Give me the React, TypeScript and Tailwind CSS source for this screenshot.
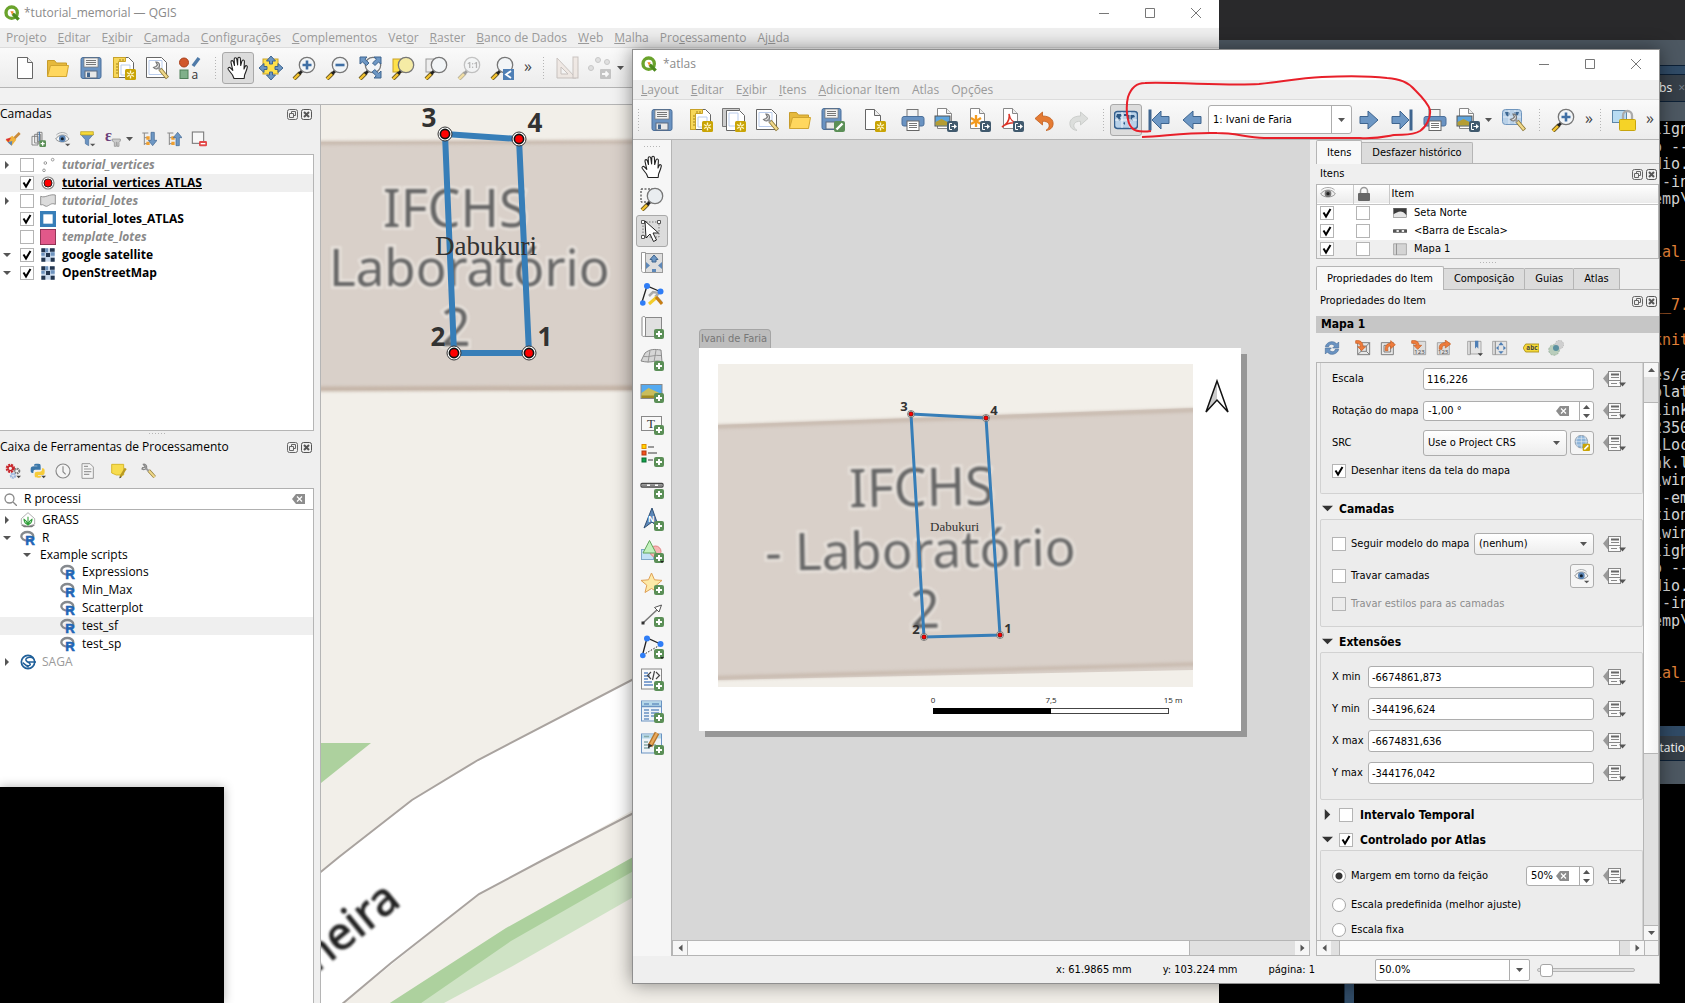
import React, { ReactNode } from "react";

/* ---------- shared icon parts (24 x 24 box) ---------- */

function Svg({ size = 24, children }: { size?: number; children: ReactNode }) {
  return (
    <svg width={size} height={size} viewBox="0 0 24 24" fill="none" aria-hidden="true" className="shrink-0">
      {children}
    </svg>
  );
}

const Plus = () => (
  <g>
    <rect x="14" y="14" width="10" height="10" rx="2" fill="#5b8f57" />
    <path d="M19 16v6M16 19h6" stroke="#fff" strokeWidth="2" />
  </g>
);
const Gold = () => (
  <g>
    <rect x="13" y="13" width="11" height="11" rx="1.500" fill="#c9a405" />
    <path d="M18.500 14.500v8M15 16.500l7 4M22 16.500l-7 4" stroke="#fff6c8" strokeWidth="1.400" />
    <circle cx="18.500" cy="18.500" r="1" fill="#c9a405" />
  </g>
);
const Export = () => (
  <g>
    <rect x="13" y="13" width="11" height="11" rx="2" fill="#415a6e" />
    <path d="M18 15.500h-2.500v6H18M17.500 18.500H22" stroke="#fff" strokeWidth="1" />
    <path d="M20 16v5l3-2.500z" fill="#fff" />
  </g>
);
const Page = () => (
  <g>
    <path d="M4.500 1.500h10l5 5v16h-15z" fill="#fff" stroke="#666" />
    <path d="M14.500 1.500v5h5" fill="#eee" stroke="#666" />
  </g>
);
const HalfPage = () => (
  <g>
    <path d="M3.500 .5h9l5 5v15h-14z" fill="#fff" stroke="#888" />
    <path d="M12.500 .5v5h5" fill="#eee" stroke="#888" />
  </g>
);
const Lens = ({ fill = "#f2f5f7", stroke = "#777" }: { fill?: string; stroke?: string }) => (
  <g>
    <path d="M2 23l6-6" stroke="#665522" strokeWidth="4" />
    <path d="M2 23l5.500-5.500" stroke="#f4c430" strokeWidth="2.400" />
    <path d="M7 18l3-3" stroke="#222" strokeWidth="3" />
    <circle cx="15" cy="9" r="7.700" fill={fill} stroke={stroke} strokeWidth="1.300" />
  </g>
);
const Wrench = () => (
  <g>
    <path d="M15 13l7.500 9" stroke="#8a7430" strokeWidth="4" />
    <path d="M15 13l7 8.500" stroke="#f0d98a" strokeWidth="2.400" />
    <path d="M8.500 11.500c2 2.500 6 1.500 6-2 0-2-1.500-3.500-3.500-3.500l1.500 3-1.500 1.500z" fill="#e4e4e4" stroke="#777" strokeWidth="1.200" />
    <path d="M13 11l2.500 3" stroke="#999" strokeWidth="2.500" />
  </g>
);

const Drop = () => (
  <svg width="9" height="6" viewBox="0 0 9 6" aria-hidden="true" className="shrink-0">
    <path d="M1 1h7L4.500 5z" fill="#555" />
  </svg>
);

const ArrowShape = ({ d }: { d: string }) => <path d={d} fill="#6d97c4" stroke="#3f658f" strokeWidth="1" />;

const icons: Record<string, ReactNode> = {
  qgis: (
    <>
      <circle cx="11.500" cy="11.500" r="8.500" stroke="#6aa32c" strokeWidth="5" />
      <path d="M13 13l9 9" stroke="#4c8a1e" strokeWidth="5" />
      <path d="M9.500 9.500h5l-2 5.500z" fill="#f08a24" />
    </>
  ),
  file: <Page />,
  folder: (
    <>
      <path d="M1.500 20V4.500h7l2 2.500h10V20z" fill="#e6b93c" stroke="#c79c2b" />
      <path d="M1.500 20.500l3-11h18l-2 11z" fill="#ffd75e" stroke="#d1a531" />
    </>
  ),
  save: (
    <>
      <rect x="2" y="1.500" width="20" height="21" rx="2" fill="#6a93c2" stroke="#4a6f9b" />
      <rect x="5" y="2" width="14" height="9" fill="#f2f2f2" stroke="#777" strokeWidth=".7" />
      <path d="M7 4.500h10M7 6.500h10M7 8.500h10" stroke="#777" />
      <rect x="6" y="15" width="12" height="7" fill="#e8e8e8" stroke="#5a6b80" />
      <rect x="8" y="16.500" width="3" height="4.500" fill="#41658f" />
    </>
  ),
  saveAs: (
    <>
      <rect x="1" y=".5" width="19" height="21" rx="2" fill="#6a93c2" stroke="#4a6f9b" />
      <rect x="4" y="1" width="13" height="9" fill="#f2f2f2" stroke="#777" strokeWidth=".7" />
      <path d="M6 3.500h9M6 5.500h9M6 7.500h9" stroke="#777" />
      <rect x="5" y="14" width="9" height="7" fill="#e8e8e8" stroke="#5a6b80" />
      <rect x="13" y="13" width="11" height="11" rx="2" fill="#5b8f57" />
      <path d="M15.500 21.500l6-6" stroke="#fff" strokeWidth="2.400" />
    </>
  ),
  newLayout: (
    <>
      <path d="M1.500 1.500h15l5 5v15h-20z" fill="#fff" stroke="#666" />
      <path d="M9 9h9v10H9z" stroke="#b9ccec" />
      <path d="M1.500 1.500h12v4h-7v16h-5z" fill="#f7d75a" stroke="#c9a227" />
      <path d="M4 8h2M4 11h2M4 14h2M4 17h2M8 3v2M11 3v2" stroke="#8a6d12" strokeWidth=".8" />
      <Gold />
    </>
  ),
  dupLayout: (
    <>
      <path d="M.5 .5h17v18H.5z" fill="#ccc" stroke="#777" />
      <path d="M4.500 2.500h13l5 5v15h-18z" fill="#fff" stroke="#666" />
      <path d="M7 5h9v13H7z" stroke="#b9ccec" />
      <Gold />
    </>
  ),
  manager: (
    <>
      <path d="M1.500 1.500h15l5 5v15h-20z" fill="#fff" stroke="#666" />
      <path d="M4 4.500h13v14H4z" stroke="#b9ccec" />
      <Wrench />
    </>
  ),
  styles: (
    <>
      <circle cx="6" cy="6.500" r="4.500" fill="#d1572b" stroke="#a8411c" />
      <path d="M15 10l6-8" stroke="#4f7aa8" strokeWidth="3.500" />
      <rect x="2" y="14" width="8" height="8.500" fill="#7fb08a" stroke="#4e8059" />
      <text x="13.500" y="23" fontSize="12" fill="#333" fontFamily="Open Sans">a</text>
    </>
  ),
  hand: (
    <path
      d="M8 22.500L6.500 19 2.300 13.500c-1-1.700.9-2.900 2.200-1.500l2.300 2.300L5 6.300c-.3-1.900 1.900-2.300 2.400-.5l1.100 3.700L8.200 3.300c0-2 2.300-2 2.600-.1l.8 5.800.2-6.300c.1-1.900 2.500-1.800 2.600.1l.3 6.700 1.200-4.400c.5-1.700 2.600-1.300 2.500.4l-.4 7.500 1.100-2.500c.7-1.500 2.500-.9 2.200.7-.7 4-2.300 5.800-2.800 8.300l-.3 3z"
      fill="#fff"
      stroke="#222"
      strokeWidth="1.100"
      strokeLinejoin="round"
    />
  ),
  pan: (
    <>
      <rect x="4" y="3" width="15" height="15" fill="#ffe14a" stroke="#c9a227" />
      <ArrowShape d="M12 0l4.500 5h-3v3h-3V5h-3z" />
      <ArrowShape d="M12 24l-4.500-5h3v-3h3v3h3z" />
      <ArrowShape d="M0 12l5-4.500v3h3v3H5v3z" />
      <ArrowShape d="M24 12l-5-4.500v3h-3v3h3v3z" />
    </>
  ),
  zoomIn: (
    <>
      <Lens />
      <path d="M15 4.500v9M10.500 9h9" stroke="#3f6fa5" strokeWidth="2.600" />
    </>
  ),
  zoomOut: (
    <>
      <Lens />
      <path d="M10.500 9h9" stroke="#3f6fa5" strokeWidth="2.600" />
    </>
  ),
  zoomFull: (
    <>
      <Lens />
      <ArrowShape d="M2 1h7L7 3.200l4 3.800-2.500 2.500L4.500 6 2 8z" />
      <ArrowShape d="M23 1v7l-2.500-2-3.500 3.500L14.500 7l4-3.800L16 1z" />
      <ArrowShape d="M23 22h-7l2.200-2.200-4-3.800 2.500-2.500 4 3.800L23 15z" />
    </>
  ),
  zoomSel: (
    <>
      <rect x="2" y="3" width="11" height="13" fill="#ffe14a" stroke="#c9a227" />
      <Lens fill="#f5eba5" />
    </>
  ),
  zoomLayer: (
    <>
      <rect x="2" y="3" width="11" height="13" fill="#eee" stroke="#999" />
      <Lens />
    </>
  ),
  zoomNative: (
    <g opacity=".4">
      <Lens />
      <text x="10" y="12" fontSize="8" fontWeight="700" fill="#555" fontFamily="Open Sans">1:1</text>
    </g>
  ),
  zoomLast: (
    <>
      <Lens />
      <rect x="13" y="13" width="11" height="11" fill="#4f7fb5" />
      <path d="M21 15l-5 3.500 5 3.500" stroke="#fff" strokeWidth="1.800" />
    </>
  ),
  measure: (
    <g opacity=".55">
      <path d="M2 22V2l19 20z" fill="#ece0d8" stroke="#a59a94" />
      <path d="M6 18v-7l7 7z" fill="#f6f6f6" stroke="#a59a94" />
      <rect x="18" y="1" width="5" height="21" fill="#ece0d8" stroke="#a59a94" />
    </g>
  ),
  points: (
    <g opacity=".5">
      <circle cx="10" cy="4" r="2.500" fill="#ccc" stroke="#999" />
      <circle cx="19" cy="6" r="2.500" fill="#ccc" stroke="#999" />
      <circle cx="3" cy="12" r="2.500" fill="#ccc" stroke="#999" />
      <rect x="12" y="13" width="11" height="10" rx="1" fill="#999" />
      <path d="M14 18h6M17.500 15.500L20 18l-2.500 2.500" stroke="#fff" strokeWidth="1.800" />
    </g>
  ),
  newPage: (
    <>
      <path d="M3.500 1.500h9l6 6v14h-15z" fill="#fff" stroke="#666" />
      <path d="M12.500 1.500v6h6" fill="#eee" stroke="#666" />
      <Gold />
    </>
  ),
  print: (
    <>
      <rect x="6" y="1.500" width="11" height="9" fill="#f4f4f4" stroke="#777" />
      <rect x="1" y="8.500" width="22" height="9.500" rx="2" fill="#6a93c2" stroke="#4a6f9b" />
      <rect x="6" y="13" width="12" height="9.500" fill="#fff" stroke="#666" />
      <path d="M8 15.500h8M8 17.500h8M8 19.500h8" stroke="#777" />
    </>
  ),
  image: (
    <>
      <HalfPage />
      <rect x="1" y="8" width="15" height="10" fill="#5fa4dc" stroke="#555" />
      <path d="M1.500 14l6-3 8 4v2.500h-14z" fill="#b59d33" />
      <Export />
    </>
  ),
  svgOut: (
    <>
      <HalfPage />
      <path d="M9 7v12M4 10l10 6M14 10L4 16" stroke="#f39a1e" strokeWidth="2.300" />
      <Export />
    </>
  ),
  pdf: (
    <>
      <HalfPage />
      <path d="M2 19c5-3 8-8 7-13 1 6 5 9 9 9-6-1-11 0-16 4z" stroke="#dc3226" strokeWidth="1.500" />
      <Export />
    </>
  ),
  undo: <path d="M2 10.500L9.500 4v4C17 8 21 12 20 17c-.5 3-3 5-7 5.500 3-2.500 4-4.500 2.500-7-1-1.700-3-2.200-6-2.200V17z" fill="#e57b33" stroke="#bf5d1d" strokeWidth=".8" />,
  redo: <path d="M22 10.500L14.500 4v4C7 8 3 12 4 17c.5 3 3 5 7 5.500-3-2.500-4-4.500-2.500-7 1-1.700 3-2.200 6-2.200V17z" fill="#dcdedc" stroke="#c4c6c4" strokeWidth=".8" />,
  atlas: (
    <>
      <rect x=".5" y="3.500" width="23" height="17" rx="3" fill="#b9d1e8" stroke="#35608f" strokeWidth="1.500" />
      <path d="M3 6h4l1 2-2 1 1 3-2 1-1-3-2-1zM10 6h3v2h-3zM14 7h6l1 2-3 1 1 3-2-1-1 2-2-3zM9 15l2-1v3z" fill="#2c5885" />
      <path d="M8 4v16M16 4v16M1 12h22" stroke="#fff" strokeWidth=".8" />
    </>
  ),
  first: (
    <>
      <path d="M3 1.500v21" stroke="#3f658f" strokeWidth="3" />
      <ArrowShape d="M5 12l9-9v5.500h8v7h-8V21z" />
    </>
  ),
  prev: <ArrowShape d="M3 12l10-9v5.500h8v7h-8V21z" />,
  next: <ArrowShape d="M21 12L11 3v5.500H3v7h8V21z" />,
  last: (
    <>
      <path d="M21 1.500v21" stroke="#3f658f" strokeWidth="3" />
      <ArrowShape d="M19 12l-9-9v5.500H2v7h8V21z" />
    </>
  ),
  atlasSettings: (
    <>
      <rect x=".5" y="1.500" width="19" height="15" rx="3" fill="#b9d1e8" stroke="#6f95bd" />
      <path d="M3 4h4l1 2-2 3-2-2zM12 4h5l-1 3-3 1z" fill="#3d6792" />
      <path d="M7 2v14M13 2v14M1 9h18" stroke="#e8f0f8" strokeWidth=".8" />
      <Wrench />
    </>
  ),
  lock: (
    <>
      <rect x=".5" y="2.500" width="14" height="12" fill="#b9dcf2" stroke="#5d86a8" />
      <path d="M11 12V7.500a4.500 4.500 0 0 1 9 0V12" stroke="#aaa" strokeWidth="2.300" />
      <rect x="7.500" y="11.500" width="16" height="11" rx="1" fill="#f5d327" stroke="#c7a40c" />
    </>
  ),
  zoomTool: (
    <>
      <rect x="1" y="2" width="17" height="13" stroke="#222" strokeDasharray="2 1.500" />
      <Lens fill="#e9edf0" />
    </>
  ),
  select: (
    <>
      <path d="M3 3h16v15H3z" stroke="#777" strokeDasharray="1.500 1.500" />
      <path d="M1.500 1.500h3v3h-3zM17.500 1.500h3v3h-3zM1.500 16.500h3v3h-3z" fill="#fff" stroke="#555" />
      <path d="M5 2l1 17 4-4 3.500 7.500 3-1.500-3.500-7h5.500z" fill="#fff" stroke="#222" />
    </>
  ),
  moveContent: (
    <>
      <path d="M1.500 1.500h4l0 20h-2c-2 0-2-2-2-3z" fill="#fff" stroke="#999" />
      <rect x="5.500" y="2.500" width="17" height="19" fill="#dedede" stroke="#999" />
      <ArrowShape d="M14 4l4 4.500h-2V11h-4V8.500h-2z" />
      <path d="M6 11l4 3.500L6 18zM22 11l-4 3.500 4 3.500zM12 18h4v3h-4z" fill="#5d88b9" />
    </>
  ),
  editNodes: (
    <>
      <path d="M2 19L7 3l13 5.500" stroke="#222" strokeWidth="1.300" />
      <path d="M9 13l4-4 6 1-3 3 6 7" stroke="#aaa" strokeWidth="2.500" />
      <path d="M9 21l8-7" stroke="#f2cc2a" strokeWidth="3" />
      <path d="M16 14l6 7" stroke="#c77d12" strokeWidth="3" />
      <circle cx="7" cy="3" r="3" fill="#2f7df6" />
      <circle cx="20.500" cy="8.500" r="3" fill="#2f7df6" />
      <circle cx="2.800" cy="20" r="2.800" fill="#2f7df6" />
    </>
  ),
  addMap: (
    <>
      <rect x="5.500" y="2.500" width="16" height="19" fill="#e0e0e0" stroke="#888" />
      <path d="M2 3c0-2 3.500-2 3.500 0v17c0 2-3.500 2-3.500 0z" fill="#fff" stroke="#888" />
      <Plus />
    </>
  ),
  add3d: (
    <>
      <path d="M5 6c5-4 9-4 16-3l1 12c-6-3-10 2-21-1z" fill="#d6d6d6" stroke="#888" />
      <path d="M3 9.500c7 1 11-2 18-1M10 3.500L8 15.500M16 3L14 15" stroke="#999" />
      <Plus />
    </>
  ),
  addPicture: (
    <>
      <rect x="1" y="5.500" width="21" height="14" fill="#55aaf0" stroke="#888" />
      <path d="M1.500 14l7-5 13 6v4h-20z" fill="#c9bd5d" />
      <path d="M1.500 16.500h20V19h-20z" fill="#a08a22" />
      <Plus />
    </>
  ),
  addLabel: (
    <>
      <rect x="1.500" y="5.500" width="20" height="14" fill="#f8f8f8" stroke="#888" />
      <text x="7" y="17" fontSize="13" fill="#333" fontFamily="Liberation Serif">T</text>
      <Plus />
    </>
  ),
  addLegend: (
    <>
      <rect x="2" y="1.500" width="4" height="4" fill="#ffd400" stroke="#e08b00" />
      <rect x="2" y="8" width="4" height="4" fill="#f4511e" stroke="#b23a10" />
      <rect x="2" y="15" width="4" height="4" fill="#12a34a" stroke="#0b6b30" />
      <path d="M8 4h6M8 10h9M8 17h5" stroke="#999" strokeWidth="1.800" />
      <Plus />
    </>
  ),
  addScale: (
    <>
      <rect x="1" y="8.500" width="22" height="3.500" rx="1" fill="#fff" stroke="#444" strokeWidth="1.300" />
      <path d="M2 10.300h5M10 10.300h5M18 10.300h4" stroke="#888" strokeWidth="2" />
      <Plus />
    </>
  ),
  addNorth: (
    <>
      <path d="M12 1l7 20-7-6-8 6z" fill="#5d88b9" stroke="#2f4f73" />
      <text x="8" y="15" fontSize="8" fontWeight="700" fill="#fff" fontFamily="Open Sans">N</text>
      <Plus />
    </>
  ),
  addShape: (
    <>
      <rect x="1.500" y="10.500" width="12" height="10" fill="#c3e2f6" stroke="#7fa9c8" />
      <circle cx="15.500" cy="12.500" r="5.500" fill="#f8b4b4" stroke="#e08080" />
      <path d="M9.500 1.500L16 14H3z" fill="#c2f2bd" stroke="#5fa35a" />
      <Plus />
      <path d="M20 22h4l-2 2z" fill="#222" />
    </>
  ),
  addMarker: (
    <>
      <path d="M11.500 2l3 6.800 7.500.6-5.700 4.800 1.700 7.300-6.500-4-6.500 4 1.800-7.300L1 9.400l7.500-.6z" fill="#fdeaa8" stroke="#dfa055" />
      <Plus />
    </>
  ),
  addArrow: (
    <>
      <path d="M3 20L19 5" stroke="#777" strokeWidth="1.500" />
      <path d="M21.500 2l-2.500 7-4.500-4.500z" fill="#fff" stroke="#555" />
      <rect x="1.500" y="18.500" width="3" height="3" fill="#333" />
      <Plus />
    </>
  ),
  addNodes: (
    <>
      <path d="M2.500 20L7 3l13.500 6" stroke="#222" strokeWidth="1.300" />
      <path d="M3 20l17-10" stroke="#222" strokeDasharray="1.500 1.500" />
      <circle cx="7" cy="3.500" r="3" fill="#2f7df6" />
      <circle cx="20.500" cy="9" r="3" fill="#2f7df6" />
      <circle cx="2.800" cy="20.500" r="2.800" fill="#2f7df6" />
      <Plus />
      <path d="M20 22h4l-2 2z" fill="#222" />
    </>
  ),
  addHtml: (
    <>
      <rect x="1.500" y="2" width="20" height="20" fill="#fafafa" stroke="#888" />
      <path d="M4 6h4M4 9h6M4 12h4M4 15h8M4 18h9" stroke="#5d88c4" strokeWidth="1.600" />
      <path d="M11 5L7.500 8.500 11 12M16 5l3.500 3.500L16 12M14.500 4l-2 9" stroke="#444" strokeWidth="1.200" />
      <Plus />
    </>
  ),
  addTable: (
    <>
      <rect x="1.500" y="2" width="20" height="20" fill="#eef3f8" stroke="#6a93c2" />
      <rect x="2" y="2.500" width="19" height="4.500" fill="#b6d9ea" />
      <path d="M4 5h5M12 5h7M2 7.500h19M4 11h5M11 11h8M4 14h5M11 14h8M4 17h5M11 17h3M4 20h5" stroke="#6a93c2" strokeWidth="1.400" />
      <Plus />
    </>
  ),
  addFixed: (
    <>
      <rect x="1.500" y="3" width="20" height="19" fill="#eef3f8" stroke="#6a93c2" />
      <rect x="2" y="3.500" width="19" height="4" fill="#b6d9ea" />
      <path d="M4 5.500h5M4 11h4M4 14h4M4 17h6M12 14h4" stroke="#8aa" strokeWidth="1.400" />
      <path d="M17 2l-7 13" stroke="#b5742a" strokeWidth="5" />
      <path d="M17 2l-6.500 12" stroke="#e8a95b" strokeWidth="2.500" />
      <path d="M12.500 14.500L8 17.500l.3-5z" fill="#333" />
      <Plus />
    </>
  ),
  brush: (
    <>
      <path d="M22 3l-9 9" stroke="#c98b3c" strokeWidth="4" />
      <path d="M11 7l6 6-7 9-9-8z" fill="#f0b23c" />
      <path d="M1 12l8-2-4 7z" fill="#d33" />
      <path d="M4 17l7-2-1 7z" fill="#5b86b8" />
    </>
  ),
  addGroup: (
    <>
      <path d="M3 8h9v13H3zM7 5h9v13H7zM11 2h7v14h-7z" fill="#f4f4f4" stroke="#777" strokeWidth="1.300" />
      <path d="M14 1v14" stroke="#3f6fa5" strokeWidth="1.500" />
      <Plus />
    </>
  ),
  eye: (
    <>
      <path d="M1 12c5-8 16-8 20 0-5 6-15 6-20 0z" fill="#f2f2f2" stroke="#8f9396" strokeWidth="1.500" />
      <circle cx="11" cy="11.500" r="5" fill="#5a84b4" />
      <circle cx="11" cy="11.500" r="2.300" fill="#15212e" />
      <path d="M2 6c5-5 13-5 17 0" stroke="#a5a9ac" strokeWidth="1.500" />
      <path d="M15 19h8l-4 4z" fill="#555" />
    </>
  ),
  eyeGrey: (
    <>
      <path d="M1 12c5-8 18-8 22 0-5 6-17 6-22 0z" fill="#eee" stroke="#999" strokeWidth="1.500" />
      <circle cx="12" cy="11.500" r="5" fill="#777" />
      <circle cx="12" cy="11.500" r="2.500" fill="#222" />
      <path d="M2 6c5-5 15-5 20 0" stroke="#aaa" strokeWidth="1.500" />
    </>
  ),
  filter: (
    <>
      <path d="M1 5h19l-7 8v9l-5-3v-6z" fill="#6a93c2" stroke="#4a6f9b" />
      <path d="M1 1h19v5H1z" fill="#f5d93a" stroke="#b79b16" />
      <path d="M15 19h8l-4 4z" fill="#555" />
    </>
  ),
  epsilon: (
    <>
      <text x="0" y="15" fontSize="24" fontWeight="700" fill="#6b3f7a" fontFamily="Liberation Serif">ε</text>
      <path d="M11 12h12v3l-2 2v6h-3v-6l-1 0v6h-3v-6l-3-2z" fill="#ccc" stroke="#888" />
    </>
  ),
  expand: (
    <>
      <path d="M2 3h9M5 3v18M5 10h5M5 19h5" stroke="#888" strokeWidth="1.500" />
      <path d="M8 8h5v5H8zM8 16h5v5H8z" fill="#f0a030" />
      <ArrowShape d="M15 2h5v12h4l-6.500 8L11 14h4z" />
    </>
  ),
  collapse: (
    <>
      <path d="M2 3h9M5 3v18M5 10h5M5 19h5" stroke="#888" strokeWidth="1.500" />
      <path d="M8 8h5v5H8zM8 16h5v5H8z" fill="#f0a030" />
      <ArrowShape d="M15 22h5V10h4l-6.500-8L11 10h4z" />
    </>
  ),
  removeLayer: (
    <>
      <rect x="2" y="1.500" width="17" height="17" fill="#f7f7f7" stroke="#777" strokeWidth="1.600" />
      <rect x="12" y="15" width="12" height="8" rx="2" fill="#e24848" />
      <path d="M14.500 19h7" stroke="#fff" strokeWidth="2" />
    </>
  ),
  vertices: (
    <g stroke="#999" strokeWidth="1.500">
      <circle cx="6" cy="20" r="2" />
      <circle cx="8" cy="9" r="2" />
      <circle cx="19" cy="4" r="2" />
    </g>
  ),
  redDot: (
    <>
      <circle cx="12" cy="12" r="9" fill="#fff" stroke="#888" strokeWidth="1.800" />
      <circle cx="12" cy="12" r="6" fill="#f00" stroke="#222" strokeWidth="1.500" />
    </>
  ),
  poly: <path d="M1 5c7 3 13-4 22-2v14c-6-3-9 2-13 3-4 0-5-4-9-2z" fill="#dcdcdc" stroke="#888" strokeWidth="1.300" />,
  blueBox: <rect x="2.500" y="2.500" width="19" height="19" fill="#fff" stroke="#377eb8" strokeWidth="5" />,
  pinkBox: <rect x=".7" y=".7" width="22.600" height="22.600" fill="#e2588a" stroke="#8c2f50" strokeWidth="1.400" />,
  raster: (
    <>
      <rect x="2" y="2" width="20" height="20" fill="#c9d9ec" />
      <path d="M2 2h6v6H2zM15 2h7v5h-7zM9 9h6v6H9zM2 16h6v6H2zM16 16h6v6h-6z" fill="#24364f" />
      <path d="M8 2h4v6H8zM2 9h5v4H2zM16 8h6v5h-6z" fill="#6f94bf" />
    </>
  ),
  gears: (
    <>
      <circle cx="8" cy="8" r="5" stroke="#c8282d" strokeWidth="4" strokeDasharray="2.800 1.200" />
      <circle cx="8" cy="8" r="3.500" stroke="#c8282d" strokeWidth="2" />
      <circle cx="18" cy="12" r="3.500" stroke="#777" strokeWidth="3" strokeDasharray="2 1" />
      <circle cx="12" cy="19" r="3" stroke="#9bb5dc" strokeWidth="3.500" strokeDasharray="2.500 .8" />
      <path d="M17 19h7l-3.500 4z" fill="#444" />
    </>
  ),
  python: (
    <>
      <path d="M11 1c5 0 5 1 5 5v4H8c-3 0-3 2-3 5-4 0-4-2-4-5 0-4 1-5 5-5h5V4H6c0-3 2-3 5-3z" fill="#3a76a8" />
      <path d="M12 22c-5 0-5-1-5-5 0-3 1-4 4-4h4c3 0 3-2 3-5 4 0 4 2 4 5 0 4-1 5-5 5h-5v1h5c0 3-2 3-5 3z" fill="#f6cb3a" />
      <path d="M17 19h7l-3.500 4z" fill="#444" />
    </>
  ),
  clock: (
    <>
      <circle cx="12" cy="12" r="10.500" fill="#f4f4f4" stroke="#888" strokeWidth="1.700" />
      <path d="M12 5v8l4 4" stroke="#888" strokeWidth="1.700" />
    </>
  ),
  doc: (
    <>
      <path d="M3 1h12l5 5v17H3z" fill="#f4f4f4" stroke="#999" strokeWidth="1.500" />
      <path d="M6 9h11M6 13h11M6 17h8M6 5h6" stroke="#999" strokeWidth="1.800" />
    </>
  ),
  note: (
    <>
      <path d="M1 2h18v16H8l-7-3z" fill="#f7dc4e" stroke="#d3b21f" strokeWidth="1.300" />
      <path d="M22 8l-8 13" stroke="#b99a22" strokeWidth="3.500" />
      <path d="M14 20l-2 3 3-1z" fill="#333" />
    </>
  ),
  wrench: (
    <>
      <path d="M13 11l9 10" stroke="#8a7430" strokeWidth="5" />
      <path d="M13 11l9 10" stroke="#f0d98a" strokeWidth="3" />
      <path d="M3 9c3 2 7 0 7-3S7 1 5 2l3 4-4 1z" stroke="#888" strokeWidth="2" fill="#ddd" />
      <path d="M9 8l4 4" stroke="#999" strokeWidth="3" />
    </>
  ),
  grass: (
    <>
      <path d="M12 1l10 9v8l-10 4-10-4v-8z" fill="#fff" stroke="#888" />
      <path d="M1 19l5 4h12l5-4-11 2z" fill="#777" />
      <path d="M12 21V7M12 19C10 14 8 12 6 11c0 4 3 7 6 8M12 19c2-5 4-7 6-8 0 4-3 7-6 8" stroke="#2f9e38" strokeWidth="1.600" />
    </>
  ),
  rlang: (
    <>
      <ellipse cx="11" cy="9.500" rx="9" ry="6.500" stroke="#85898e" strokeWidth="3.500" />
      <text x="8" y="22" fontSize="20" fontWeight="700" fill="#2165b7" stroke="#2165b7" strokeWidth=".8" fontFamily="Liberation Sans">R</text>
    </>
  ),
  saga: (
    <>
      <circle cx="12" cy="12" r="10" fill="#fff" stroke="#1f5f99" strokeWidth="2.500" />
      <path d="M20 6C12 3 5 8 11 11.500S18 19 7 17M10 12h14M4 13l9 7" stroke="#1f5f99" strokeWidth="2.200" />
    </>
  ),
  refresh: (
    <>
      <path d="M2 10C4 2 15 0 19 6l3-3v9h-9l3-3C12 5 8 6 7 10z" fill="#6a93c2" stroke="#4a6f9b" />
      <path d="M22 14c-2 8-13 10-17 4l-3 3v-9h9l-3 3c4 4 8 3 9-1z" fill="#6a93c2" stroke="#4a6f9b" />
    </>
  ),
  setExtent: (
    <>
      <path d="M4 4h18v18H4zM9 9h8v8H9zM4 22l5-5M22 4l-5 5M22 22l-5-5" fill="#e8e8e8" stroke="#777" strokeWidth="1.400" />
      <path d="M1 1c7-1 11 2 11 9h4l-6 6-6-6h4c0-4-2-5-7-5z" fill="#ee7b3c" stroke="#c65a1d" />
    </>
  ),
  viewExtent: (
    <>
      <path d="M2 4h18v18H2zM6 8h10v10H6z" fill="#e8e8e8" stroke="#777" strokeWidth="1.400" />
      <path d="M8 16c-1-7 2-11 8-11V1l7 6-7 6V9c-4 0-5 2-4 7z" fill="#ee7b3c" stroke="#c65a1d" />
    </>
  ),
  setScale: (
    <>
      <path d="M4 2h18v20H4z" fill="#ddd" stroke="#888" />
      <text x="5" y="21" fontSize="9" fill="#444" fontFamily="Open Sans">123</text>
      <path d="M1 1c7-1 11 2 11 7h4l-6 6-6-6h4c0-2-2-3-7-3z" fill="#ee7b3c" stroke="#c65a1d" />
    </>
  ),
  viewScale: (
    <>
      <path d="M2 4h18v18H2z" fill="#ddd" stroke="#888" />
      <text x="3" y="21" fontSize="9" fill="#444" fontFamily="Open Sans">123</text>
      <path d="M5 14c-1-7 3-10 9-10V0l8 6-8 6V8c-4 0-5 2-5 6z" fill="#ee7b3c" stroke="#c65a1d" />
    </>
  ),
  bookmark: (
    <>
      <path d="M1 2h4v20H1zM5 2h16v19H5z" fill="#e4e4e4" stroke="#888" />
      <path d="M12 1h5v12l-2.500-3L12 13z" fill="#4f7fb5" />
      <path d="M16 20h8l-4 4z" fill="#444" />
    </>
  ),
  movePreview: (
    <>
      <path d="M1 2h4v20H1zM5 2h17v20H5z" fill="#e4e4e4" stroke="#888" />
      <path d="M13.500 3l4 5h-8zM13.500 21l4-4h-8zM6 12l4-3.500v7zM21 12l-4-3.500v7z" fill="#4f7fb5" />
    </>
  ),
  labels: (
    <>
      <path d="M0 12l4-6h20v12H4z" fill="#f5d93a" stroke="#a98d12" strokeWidth="1.300" />
      <text x="5" y="15.500" fontSize="9.500" fontWeight="700" fill="#444" fontFamily="Open Sans">abc</text>
    </>
  ),
  clip: (
    <>
      <circle cx="9" cy="15" r="8" fill="#b9cdbb" stroke="#8ba58e" strokeDasharray="3 2" />
      <circle cx="17" cy="7" r="6.500" fill="#cfcfcf" stroke="#aaa" strokeDasharray="2 2" />
      <circle cx="12" cy="12" r="4.500" fill="#5b90a0" />
    </>
  ),
  globe: (
    <>
      <circle cx="11" cy="10" r="9.500" fill="#8db4d9" stroke="#8b8f94" />
      <path d="M11 1v19M2 10h18M4 5h14M4 15h14M6 2c-3 5-3 12 0 17M16 2c3 5 3 12 0 17" stroke="#e7eef5" strokeWidth=".9" />
      <rect x="13" y="13" width="11" height="11" rx="1.500" fill="#c9a405" />
      <path d="M15.500 21.500l6-6" stroke="#fff" strokeWidth="2.400" />
    </>
  ),
  itemNorth: (
    <>
      <rect x="1" y="4" width="22" height="16" fill="#e6e6e6" stroke="#777" />
      <path d="M1 4h22v12C15 5 8 10 1 14z" fill="#3c3c3c" />
    </>
  ),
  itemScale: (
    <>
      <rect x="0" y="9" width="24" height="6" rx="1" fill="#555" />
      <rect x="6" y="10.500" width="4" height="3" fill="#fff" />
      <rect x="15" y="10.500" width="4" height="3" fill="#fff" />
    </>
  ),
  itemMap: <path d="M1 3h5v19H1zM6 3h17v19H6z" fill="#d4d4d4" stroke="#888" />,
};

function Icon({ name, size = 24 }: { name: string; size?: number }) {
  return <Svg size={size}>{icons[name]}</Svg>;
}

/* ---------- small controls ---------- */

function Tool({ name, label, wide }: { name: string; label: string; wide?: boolean }) {
  return (
    <button
      aria-label={label}
      className={
        wide
          ? "flex h-8 w-8 shrink-0 items-center justify-center rounded-[3px] border border-[#a9a9a9] bg-[#dcdcdc]"
          : "flex h-8 w-[33px] shrink-0 items-center justify-center"
      }
    >
      <Icon name={name} />
    </button>
  );
}

const Handle = () => <span className="mx-1 h-6 w-[4px] shrink-0 bg-[radial-gradient(#b5b5b5_1px,transparent_1px)] bg-[size:3px_3px]" />;
const HHandle = () => <span className="h-[4px] w-[18px] shrink-0 bg-[radial-gradient(#b5b5b5_1px,transparent_1px)] bg-[size:3px_3px]" />;
const Sep = () => <span className="h-5 w-px shrink-0 bg-[#d3d3d3]" />;
const Gap = () => <span className="w-1 shrink-0" />;

function More() {
  return (
    <button aria-label="Mais" className="flex w-3 shrink-0 items-center justify-center pb-1 text-[16px] leading-4 text-[#444]">
      »
    </button>
  );
}

function DockButtons() {
  return (
    <span className="flex gap-[3px] pr-0.5">
      <button aria-label="Desacoplar" className="h-[11px] w-[11px]">
        <svg width="11" height="11" viewBox="0 0 11 11" fill="none" stroke="#666">
          <rect x=".5" y=".5" width="10" height="10" rx="2" />
          <path d="M2.500 4.500h4v4h-4zM4.500 4V2.500h4v4H7" />
        </svg>
      </button>
      <button aria-label="Fechar painel" className="h-[11px] w-[11px]">
        <svg width="11" height="11" viewBox="0 0 11 11" fill="none" stroke="#555">
          <rect x=".5" y=".5" width="10" height="10" rx="2" />
          <path d="M3 3l5 5M8 3L3 8" strokeWidth="2" />
        </svg>
      </button>
    </span>
  );
}

function Check({ id, checked, label, disabled }: { id: string; checked?: boolean; label?: string; disabled?: boolean }) {
  return (
    <span className="grid h-[14px] w-[14px] shrink-0">
      <input
        id={id}
        type="checkbox"
        aria-label={label}
        defaultChecked={checked}
        disabled={disabled}
        className="peer col-start-1 row-start-1 h-[14px] w-[14px] appearance-none border border-[#b4b4b4] bg-white disabled:bg-[#ececec]"
      />
      <svg viewBox="0 0 14 14" className="pointer-events-none invisible col-start-1 row-start-1 peer-checked:visible" fill="none">
        <path d="M3.500 6.500l2.500 4 4.500-7.500" stroke="#000" strokeWidth="2" />
      </svg>
    </span>
  );
}

function WinButtons() {
  const paths = ["M0 5.500h10", "M.5 .5h9v9h-9z", "M0 0l10 10M10 0L0 10"];
  const names = ["Minimizar", "Maximizar", "Fechar"];
  return (
    <div className="ml-auto flex">
      {paths.map((d, i) => (
        <button key={d} aria-label={names[i]} className="flex h-6 w-[46px] items-center justify-center">
          <svg width="10" height="10" viewBox="0 0 10 10" fill="none" stroke="#777">
            <path d={d} />
          </svg>
        </button>
      ))}
    </div>
  );
}

/* menu captions mark the mnemonic letter with an ampersand */
function MenuBar({ items, gap }: { items: string[]; gap: string }) {
  return (
    <nav className={`flex h-5 shrink-0 items-center border-b border-[#dcdcdc] bg-[#efefef] text-[12px] text-[#9a9a9a] ${gap}`}>
      {items.map((t) => {
        const i = t.indexOf("&");
        return (
          <button key={t} className="leading-4 whitespace-nowrap">
            {i < 0 ? t : (
              <>
                {t.slice(0, i)}
                <span className="underline">{t[i + 1]}</span>
                {t.slice(i + 2)}
              </>
            )}
          </button>
        );
      })}
    </nav>
  );
}

const Override = () => (
  <button aria-label="Substituição definida por dados" className="h-[18px] w-6 shrink-0">
    <svg width="24" height="18" viewBox="0 0 24 18" fill="none">
      <path d="M5 2.500v12L0 8.500z" fill="#999" />
      <rect x="5.500" y="1.500" width="12" height="15" fill="#fafafa" stroke="#888" />
      <path d="M8 4.500h8" stroke="#666" strokeWidth="2" />
      <path d="M8 7.500h8M5 10.500h12M8 13.500h6" stroke="#888" strokeWidth="1" />
      <path d="M16 12.500h7l-3.500 4z" fill="#555" />
    </svg>
  </button>
);

const ClearGlyph = () => (
  <svg width="13" height="10" viewBox="0 0 13 10" aria-hidden="true" className="shrink-0">
    <path d="M4 0h9v10H4L0 5z" fill="#8d8d8d" />
    <path d="M5 2.500l5 5M10 2.500l-5 5" stroke="#fff" strokeWidth="1.200" />
  </svg>
);

function Dropdown({ id, label, value, box }: { id: string; label: string; value: string; box: string }) {
  return (
    <span className={`grid items-center ${box}`}>
      <select id={id} aria-label={label} className="col-start-1 row-start-1 h-full w-full appearance-none rounded-[3px] border border-[#adadad] bg-gradient-to-b from-white to-[#ededed] pl-1">
        <option>{value}</option>
      </select>
      <span className="pointer-events-none col-start-1 row-start-1 mr-1.5 justify-self-end">
        <Drop />
      </span>
    </span>
  );
}

function Spin({ id, value, box }: { id: string; value: string; box: string }) {
  return (
    <span className={`flex h-5 items-center rounded-[3px] border border-[#adadad] bg-white ${box}`}>
      <input id={id} defaultValue={value} className="w-0 min-w-0 flex-1 bg-transparent pl-1 outline-none" />
      <ClearGlyph />
      <span className="ml-2.5 flex h-full w-[14px] flex-col items-center justify-center gap-[3px] border-l border-[#adadad]">
        <button aria-label="Aumentar" className="rotate-180"><Drop /></button>
        <button aria-label="Diminuir"><Drop /></button>
      </span>
    </span>
  );
}

/* ---------- map drawings ---------- */

function MapText({ x, y, size, children }: { x: number; y: number; size: number; children: string }) {
  return (
    <g fontFamily="Noto Sans" fontSize={size} style={{ filter: "blur(1.3px)" }}>
      <text x={x} y={y} stroke="#e6e0da" strokeWidth="6" fill="#666" style={{ paintOrder: "stroke" }}>{children}</text>
    </g>
  );
}

type Pt = [number, number];
function Lot({ pts, labels, width, r, size }: { pts: Pt[]; labels: Pt[]; width: number; r: number; size: number }) {
  const names = ["3", "4", "1", "2"];
  return (
    <g>
      <polygon points={pts.map((p) => p.join(",")).join(" ")} fill="none" stroke="#377eb8" strokeWidth={width} />
      {pts.map(([x, y], i) => (
        <g key={names[i]}>
          <circle cx={x} cy={y} r={r} fill="#fff" stroke="#333" strokeWidth={r > 5 ? 1 : 0.6} />
          <circle cx={x} cy={y} r={r * 0.66} fill="#f00" stroke="#111" strokeWidth={r > 5 ? 1.6 : 0.6} />
          <text x={labels[i][0]} y={labels[i][1]} textAnchor="middle" fontFamily="Open Sans" fontWeight="700" fontSize={size} fill="#323232">
            {names[i]}
          </text>
        </g>
      ))}
    </g>
  );
}

function CanvasMap() {
  return (
    <svg className="h-full w-full bg-[#f2efe9]" role="img" aria-label="Mapa principal">
      <rect x="0" y="37" width="900" height="248" fill="#d9d0c9" />
      <g style={{ filter: "blur(1.5px)" }}>
        <path d="M-5 38L900 34" stroke="#c9bbb0" strokeWidth="4" />
        <path d="M-5 284L900 281" stroke="#c5b5a8" strokeWidth="5" />
      </g>
      <path d="M0 638h50L0 678z" fill="#add19e" />
      <path d="M60 905L190 830 330 748v34L190 862 110 905z" fill="#cfe3c5" />
      <path d="M58 905L185 823 330 742v14L190 836 90 905z" fill="#add19e" />
      <path d="M-10 775L18 752 91 695 157 655 330 565v130L222 755 158 789 70 860 14 905H-10z" fill="#fff" />
      <path d="M-10 775L18 752 91 695 157 655 330 565M330 699L222 755 158 789 70 858 14 905" fill="none" stroke="#a9a39f" strokeWidth="2" />
      <g transform="translate(2 863) rotate(-39)" style={{ filter: "blur(.8px)" }}>
        <text x="-8" fontFamily="Noto Sans" fontSize="46" fill="#222" stroke="#222" strokeWidth="1">neira</text>
      </g>
      <MapText x={62} y={122} size={52}>IFCHS</MapText>
      <MapText x={8} y={181} size={51}>Laboratório</MapText>
      <MapText x={120} y={241} size={52}>2</MapText>
      <Lot
        pts={[[124, 29], [198, 34], [208, 248], [133, 248]]}
        labels={[[108, 22], [214, 27], [224, 241], [117, 241]]}
        width={6}
        r={7}
        size={26}
      />
      <text x="114" y="150" fontFamily="Liberation Serif" fontSize="27" fill="#323232">Dabukuri</text>
    </svg>
  );
}

function LayoutSheet() {
  return (
    <svg width="542" height="383" viewBox="0 0 542 383" className="block bg-white shadow-[6px_6px_0_#979797]" role="img" aria-label="Página do atlas">
      <clipPath id="frame"><rect x="19" y="16" width="475" height="323" /></clipPath>
      <g clipPath="url(#frame)">
        <rect x="19" y="16" width="475" height="323" fill="#f2efe9" />
        <path d="M19 77L494 60V322L19 332z" fill="#d9d0c9" />
        <path d="M10 79L500 62M10 330L500 316" stroke="#c9bbb0" strokeWidth="4" style={{ filter: "blur(1.5px)" }} />
        <g transform="rotate(-1 224 190)">
          <MapText x={151} y={158} size={52}>IFCHS</MapText>
          <MapText x={66} y={220} size={51}>- Laboratório</MapText>
          <MapText x={210} y={280} size={52}>2</MapText>
        </g>
        <Lot
          pts={[[212, 66], [287, 70], [301, 287], [225, 289]]}
          labels={[[205, 63], [295, 67], [309, 285], [217, 286]]}
          width={3}
          r={3.5}
          size={13}
        />
        <text x="231" y="183" fontFamily="Liberation Serif" fontSize="13" fill="#323232">Dabukuri</text>
      </g>
      <path d="M518 33l-11 31 11-12z" fill="#ccc" />
      <path d="M518 33l-11 31 11-12 11 12z" fill="none" stroke="#111" strokeWidth="1.500" />
      <g fontFamily="Open Sans" fontSize="8" fill="#222" textAnchor="middle">
        <text x="234" y="355">0</text>
        <text x="352" y="355">7,5</text>
        <text x="474" y="355">15 m</text>
      </g>
      <rect x="234.500" y="360.500" width="235" height="5" fill="#fff" stroke="#444" />
      <rect x="234" y="360" width="118" height="6" fill="#000" />
    </svg>
  );
}

/* ---------- background terminal ---------- */

const terminal: [string, boolean?][] = [
  ["lign"], ["o --"], ["dio."], [" -in"], ["emp\\"], [""], [""], ["ial_", true], [""], [""], ["__7.", true], [""], ["knit", true], [""],
  ["es/a"], ["plat"], ["link"], ["2350"], ["\\Loc"], ["nk.l"], ["\\win"], [" -em"], ["tion"], ["\\win"], ["ligh"], ["o --"], ["dio."],
  [" -in"], ["emp\\"], [""], [""], ["ial_", true],
];

function Background() {
  return (
    <div className="absolute inset-0 flex flex-col bg-black">
      <div className="h-10 shrink-0 bg-[#29292b]" />
      <div className="h-[25px] shrink-0 bg-[#4d5862]" />
      <div className="h-[10px] shrink-0 border-y border-[#0c2036] bg-[#304b66]" />
      <div className="flex h-[26px] shrink-0 items-center justify-end gap-1.5 bg-[#363f48] text-[12px] text-white">
        <span>bs</span>
        <span className="text-[#7a848e]">×</span>
      </div>
      <div className="h-5 shrink-0 border-t border-[#0c2036] bg-[#4d5862]" />
      <div className="grid h-[562px] w-8 shrink-0 grid-rows-[repeat(32,minmax(0,1fr))] self-end overflow-hidden font-['DejaVu_Sans_Mono',monospace] text-[15px] leading-[17px] whitespace-pre text-[#d8d8d8]">
        {terminal.map(([t, hot], i) => (
          <span key={i} className={hot ? "text-[#e8853a]" : ""}>{t}</span>
        ))}
      </div>
      <div className="mt-[43px] h-[10px] shrink-0 bg-[#304b66]" />
      <div className="flex h-6 shrink-0 items-center justify-end overflow-hidden bg-[#363f48] text-[12px] text-white">
        <span>ntatio</span>
      </div>
      <div className="h-6 shrink-0 border-t border-[#0c2036] bg-[#4d5862]" />
      <div className="mr-[331px] w-[10px] flex-1 self-end border-l border-[#16293c] bg-[#304b66]" />
    </div>
  );
}

/* ---------- main window ---------- */

type Layer = { name: string; icon: string; on: boolean; twist?: "right" | "down"; current?: boolean };
const layers: Layer[] = [
  { name: "tutorial_vertices", icon: "vertices", on: false, twist: "right" },
  { name: "tutorial_vertices_ATLAS", icon: "redDot", on: true, current: true },
  { name: "tutorial_lotes", icon: "poly", on: false, twist: "right" },
  { name: "tutorial_lotes_ATLAS", icon: "blueBox", on: true },
  { name: "template_lotes", icon: "pinkBox", on: false },
  { name: "google satellite", icon: "raster", on: true, twist: "down" },
  { name: "OpenStreetMap", icon: "raster", on: true, twist: "down" },
];

function Twist({ dir, big }: { dir?: "right" | "down"; big?: boolean }) {
  const s = big ? 11 : 8;
  return (
    <svg width={s} height={s} viewBox="0 0 8 8" aria-hidden="true" className="shrink-0" fill={big ? "#333" : "#555"}>
      {dir === "right" && <path d="M2 0l4 4-4 4z" />}
      {dir === "down" && <path d="M0 2h8L4 6z" />}
    </svg>
  );
}

function SmallTool({ name, label }: { name: string; label: string }) {
  return (
    <button aria-label={label} className="flex h-6 w-[25px] shrink-0 items-center justify-center">
      <Icon name={name} size={16} />
    </button>
  );
}

function MainWindow() {
  const proc: { t: string; icon?: string; pad: string; twist?: "right" | "down"; sel?: boolean; off?: boolean }[] = [
    { t: "GRASS", icon: "grass", pad: "pl-[3px]", twist: "right" },
    { t: "R", icon: "rlang", pad: "pl-[3px]", twist: "down" },
    { t: "Example scripts", pad: "pl-[23px]", twist: "down" },
    { t: "Expressions", icon: "rlang", pad: "pl-[43px]" },
    { t: "Min_Max", icon: "rlang", pad: "pl-[43px]" },
    { t: "Scatterplot", icon: "rlang", pad: "pl-[43px]" },
    { t: "test_sf", icon: "rlang", pad: "pl-[43px]", sel: true },
    { t: "test_sp", icon: "rlang", pad: "pl-[43px]" },
    { t: "SAGA", icon: "saga", pad: "pl-[3px]", twist: "right", off: true },
  ];
  return (
    <section className="absolute inset-y-0 left-0 right-[466px] flex flex-col bg-[#efefef]">
      <header className="flex h-7 shrink-0 items-center bg-white pb-0.5 pl-1 text-[12px] text-[#8a8a8a]">
        <Icon name="qgis" size={16} />
        <span className="ml-1">*tutorial_memorial — QGIS</span>
        <WinButtons />
      </header>
      <MenuBar
        gap="gap-[11px] pl-1.5"
        items={["Pro&jeto", "&Editar", "E&xibir", "&Camada", "&Configurações", "&Complementos", "Vet&or", "&Raster", "&Banco de Dados", "&Web", "&Malha", "Pro&cessamento", "Aj&uda"]}
      />
      <div className="flex h-10 shrink-0 items-center border-b border-[#b5b5b5] bg-gradient-to-b from-[#fafafa] to-[#ececec]">
        <span className="-ml-1 mr-1"><Handle /></span>
        <Tool name="file" label="Novo" />
        <Tool name="folder" label="Abrir" />
        <Tool name="save" label="Salvar" />
        <Tool name="newLayout" label="Novo layout" />
        <Tool name="manager" label="Gerenciador de layouts" />
        <Tool name="styles" label="Gerenciador de estilos" />
        <Gap />
        <Handle />
        <Tool name="hand" label="Mover mapa" wide />
        <Tool name="pan" label="Mover para seleção" />
        <Tool name="zoomIn" label="Aproximar" />
        <Tool name="zoomOut" label="Afastar" />
        <Tool name="zoomFull" label="Ver tudo" />
        <Tool name="zoomSel" label="Ver seleção" />
        <Tool name="zoomLayer" label="Ver camada" />
        <Tool name="zoomNative" label="Resolução nativa" />
        <Tool name="zoomLast" label="Última visualização" />
        <Gap />
        <More />
        <Gap />
        <Handle />
        <Tool name="measure" label="Medir" />
        <Tool name="points" label="Vértices" />
        <Drop />
      </div>
      <div className="flex h-[17px] shrink-0 items-center overflow-hidden border-b border-[#b5b5b5] bg-[#f2f2f2]">
        <span className="-ml-1"><Handle /></span>
      </div>
      <div className="flex min-h-0 flex-1">
        <aside className="flex w-[320px] shrink-0 flex-col pr-[6px]">
          <div className="flex h-[18px] shrink-0 items-center justify-between text-[12px]">
            <h2>Camadas</h2>
            <DockButtons />
          </div>
          <div className="flex h-[31px] shrink-0 items-center">
            <SmallTool name="brush" label="Estilo" />
            <SmallTool name="addGroup" label="Adicionar grupo" />
            <SmallTool name="eye" label="Temas do mapa" />
            <SmallTool name="filter" label="Filtrar legenda" />
            <SmallTool name="epsilon" label="Filtrar por expressão" />
            <Drop />
            <span className="w-0.5" />
            <SmallTool name="expand" label="Expandir tudo" />
            <SmallTool name="collapse" label="Recolher tudo" />
            <SmallTool name="removeLayer" label="Remover camada" />
          </div>
          <ul className="h-[277px] shrink-0 border-y border-r border-[#b5b5b5] bg-white pt-px">
            {layers.map((l, i) => (
              <li key={l.name} className={`flex h-[18px] items-center pl-[3px] ${l.current ? "bg-[#efefef]" : ""}`}>
                <Twist dir={l.twist} />
                <span className="ml-[9px] flex items-center gap-[6px]">
                  <Check id={`layer${i}`} checked={l.on} />
                  <Icon name={l.icon} size={16} />
                  <label
                    htmlFor={`layer${i}`}
                    className={`text-[12px] leading-[18px] font-bold ${l.on ? "text-black" : "text-[#8a8a8a] italic"} ${l.current ? "underline" : ""}`}
                  >
                    {l.name}
                  </label>
                </span>
              </li>
            ))}
          </ul>
          <div className="flex h-[6px] shrink-0 items-center justify-center"><HHandle /></div>
          <div className="flex h-5 shrink-0 items-center justify-between text-[12px]">
            <h2>Caixa de Ferramentas de Processamento</h2>
            <DockButtons />
          </div>
          <div className="flex h-[31px] shrink-0 items-center pb-1">
            <SmallTool name="gears" label="Modelos" />
            <SmallTool name="python" label="Scripts" />
            <SmallTool name="clock" label="Histórico" />
            <SmallTool name="doc" label="Resultados" />
            <span className="mr-1 ml-0.5"><Sep /></span>
            <SmallTool name="note" label="Editar no local" />
            <span className="mx-0.5"><Sep /></span>
            <SmallTool name="wrench" label="Opções" />
          </div>
          <div className="flex h-[22px] shrink-0 items-center border border-l-0 border-[#b0b0b0] bg-white pl-1 pr-2">
            <svg width="13" height="13" viewBox="0 0 13 13" fill="none" stroke="#888" strokeWidth="1.300" aria-hidden="true">
              <circle cx="5.500" cy="5.500" r="4.500" />
              <path d="M9 9l4 4" />
            </svg>
            <input aria-label="Pesquisar" defaultValue="R processi" className="w-0 min-w-0 flex-1 pl-[7px] text-[12px] outline-none" />
            <ClearGlyph />
          </div>
          <ul className="min-h-0 flex-1 overflow-hidden border-r border-[#b5b5b5] bg-white pt-px text-[12px]">
            {proc.map((p) => (
              <li key={p.t} className={`flex items-center ${p.icon ? "h-[18px]" : "h-4"} ${p.pad} ${p.sel ? "bg-[#efefef]" : ""} ${p.off ? "text-[#9a9a9a]" : ""}`}>
                <Twist dir={p.twist} />
                <span className="w-[9px] shrink-0" />
                {p.icon && <Icon name={p.icon} size={16} />}
                <span className={p.icon ? "ml-[6px]" : ""}>{p.t}</span>
              </li>
            ))}
          </ul>
        </aside>
        <div className="min-w-0 flex-1 border-l border-[#b5b5b5]">
          <CanvasMap />
        </div>
      </div>
      <div className="absolute bottom-0 left-0 h-[216px] w-[224px] bg-black shadow-[0_0_10px_rgba(0,0,0,0.3)]" />
    </section>
  );
}

/* ---------- atlas window ---------- */

const sideTools: [string, string][] = [
  ["hand", "Mover layout"], ["zoomTool", "Zoom"], ["select", "Selecionar"], ["moveContent", "Mover conteúdo"], ["editNodes", "Editar nós"],
  ["addMap", "Adicionar mapa"], ["add3d", "Adicionar mapa 3D"], ["addPicture", "Adicionar imagem"], ["addLabel", "Adicionar rótulo"],
  ["addLegend", "Adicionar legenda"], ["addScale", "Adicionar barra de escala"], ["addNorth", "Adicionar norte"], ["addShape", "Adicionar forma"],
  ["addMarker", "Adicionar marcador"], ["addArrow", "Adicionar seta"], ["addNodes", "Adicionar nós"], ["addHtml", "Adicionar HTML"],
  ["addTable", "Adicionar tabela"], ["addFixed", "Adicionar tabela fixa"],
];

function Tabs({ items }: { items: string[] }) {
  return (
    <div role="tablist" className="flex h-6 shrink-0 items-end border-b border-[#b5b5b5]">
      {items.map((t, i) => (
        <button
          key={t}
          role="tab"
          aria-selected={i === 0}
          className={
            i === 0
              ? "-mb-px h-6 rounded-t-[2px] border border-b-0 border-[#b5b5b5] bg-[#f8f8f8] px-[10px]"
              : "h-[21px] rounded-tr-[2px] border border-b-0 border-l-0 border-[#b5b5b5] bg-[#dcdcdc] px-[10px]"
          }
        >
          {t}
        </button>
      ))}
    </div>
  );
}

function Row({ label, id, lw, children }: { label: string; id: string; lw: string; children: ReactNode }) {
  return (
    <div className="flex h-8 items-center">
      <label htmlFor={id} className={`shrink-0 whitespace-nowrap ${lw}`}>{label}</label>
      {children}
      <span className="ml-[9px] flex"><Override /></span>
    </div>
  );
}

const fieldBox = "h-[22px] w-0 min-w-0 flex-1 rounded-[3px] border border-[#adadad] bg-white px-[3px] outline-none";
const groupBox = "rounded-[2px] border border-[#d2d2d2] bg-[#ececec] pl-[11px] pr-[15px]";

function GroupTitle({ text, dir = "down", box, id, checked }: { text: string; dir?: "right" | "down"; box?: boolean; id?: string; checked?: boolean }) {
  return (
    <div className="flex h-[25px] items-center pl-0.5 pt-1 text-[12px] font-bold">
      <Twist dir={dir} big />
      {box && id ? (
        <>
          <span className="ml-[6px] flex"><Check id={id} checked={checked} /></span>
          <label htmlFor={id} className="ml-[7px]">{text}</label>
        </>
      ) : (
        <h3 className="ml-[6px]">{text}</h3>
      )}
    </div>
  );
}

function Radio({ id, text, checked }: { id: string; text: string; checked?: boolean }) {
  return (
    <span className="flex items-center gap-[5px]">
      <input
        id={id}
        type="radio"
        name="atlas-scale"
        defaultChecked={checked}
        className="h-[14px] w-[14px] shrink-0 appearance-none rounded-full border border-[#a5a5a5] bg-white checked:bg-[radial-gradient(#333_3px,white_4px)]"
      />
      <label htmlFor={id} className="whitespace-nowrap">{text}</label>
    </span>
  );
}

function ScrollArrow({ turn }: { turn: string }) {
  return (
    <button aria-label="Rolar" className="flex h-[14px] w-[14px] shrink-0 items-center justify-center bg-[#f6f6f6]">
      <span className={`flex ${turn}`}><Drop /></span>
    </button>
  );
}

function PropertyForm() {
  return (
    <div className="flex min-h-0 flex-1 flex-col border border-[#b5b5b5]">
      <div className="flex min-h-0 flex-1">
        <div className="min-w-0 flex-1 overflow-hidden pl-[3px]">
          <div className={`${groupBox} rounded-t-none border-t-0 pb-[10px]`}>
            <Row label="Escala" id="escala" lw="w-[91px]">
              <input id="escala" defaultValue="116,226" className={fieldBox} />
            </Row>
            <Row label="Rotação do mapa" id="rot" lw="w-[91px]">
              <Spin id="rot" value="-1,00 °" box="min-w-0 flex-1" />
            </Row>
            <Row label="SRC" id="src" lw="w-[91px]">
              <Dropdown id="src" label="SRC" value="Use o Project CRS" box="h-[26px] min-w-0 flex-1" />
              <button aria-label="Selecionar SRC" className="ml-[3px] flex h-6 w-6 items-center justify-center rounded-[3px] border border-[#adadad] bg-[#f5f5f5]">
                <Icon name="globe" size={16} />
              </button>
            </Row>
            <div className="flex h-6 items-center gap-[5px]">
              <Check id="desenhar" checked />
              <label htmlFor="desenhar">Desenhar itens da tela do mapa</label>
            </div>
          </div>
          <GroupTitle text="Camadas" />
          <div className={`${groupBox} pt-2 pb-[10px]`}>
            <div className="flex h-8 items-center">
              <Check id="seguir" />
              <label htmlFor="seguir" className="ml-[5px] whitespace-nowrap">Seguir modelo do mapa</label>
              <Dropdown id="modelo" label="Modelo do mapa" value="(nenhum)" box="ml-auto h-[22px] w-[120px]" />
              <span className="ml-[9px] flex"><Override /></span>
            </div>
            <div className="flex h-8 items-center">
              <Check id="travar" />
              <label htmlFor="travar" className="ml-[5px]">Travar camadas</label>
              <button aria-label="Definir camadas por tema" className="ml-auto flex h-6 w-6 items-center justify-center rounded-[3px] border border-[#adadad] bg-[#f5f5f5]">
                <Icon name="eye" size={16} />
              </button>
              <span className="ml-[9px] flex"><Override /></span>
            </div>
            <div className="flex h-6 items-center gap-[5px] text-[#8d8d8d]">
              <Check id="estilos" disabled />
              <label htmlFor="estilos">Travar estilos para as camadas</label>
            </div>
          </div>
          <GroupTitle text="Extensões" />
          <div className={`${groupBox} pt-2 pb-[10px]`}>
            {[["X min", "-6674861,873"], ["Y min", "-344196,624"], ["X max", "-6674831,636"], ["Y max", "-344176,042"]].map(([l, v]) => (
              <Row key={l} label={l} id={l} lw="w-9">
                <input id={l} defaultValue={v} className={fieldBox} />
              </Row>
            ))}
          </div>
          <GroupTitle text="Intervalo Temporal" dir="right" box id="temporal" />
          <GroupTitle text="Controlado por Atlas" box id="atlasOn" checked />
          <div className={`${groupBox} rounded-b-none border-b-0 pt-[9px]`}>
            <div className="flex h-8 items-center">
              <Radio id="r1" text="Margem em torno da feição" checked />
              <Spin id="margem" value="50%" box="ml-auto w-[68px]" />
              <span className="ml-[9px] flex"><Override /></span>
            </div>
            <div className="flex h-[25px] items-center"><Radio id="r2" text="Escala predefinida (melhor ajuste)" /></div>
            <div className="flex h-[25px] items-center"><Radio id="r3" text="Escala fixa" /></div>
          </div>
        </div>
        <div className="flex w-[15px] shrink-0 flex-col border-l border-[#b5b5b5] bg-[#e0e0e0]">
          <ScrollArrow turn="rotate-180" />
          <div className="mt-[25px] h-[352px] border-y border-[#b5b5b5] bg-gradient-to-r from-white to-[#f2f2f2]" />
          <div className="mt-auto border-t border-[#b5b5b5]"><ScrollArrow turn="" /></div>
        </div>
      </div>
      <div className="flex h-[15px] shrink-0 border-t border-[#b5b5b5] bg-[#e0e0e0]">
        <ScrollArrow turn="rotate-90" />
        <div className="ml-2 flex-1 border-x border-[#b5b5b5] bg-[#fafafa]" />
        <span className="w-[10px]" />
        <ScrollArrow turn="-rotate-90" />
        <span className="w-[14px] border-l border-[#b5b5b5] bg-[#f2f2f2]" />
      </div>
    </div>
  );
}

function AtlasWindow() {
  const items: [string, string][] = [["Seta Norte", "itemNorth"], ["<Barra de Escala>", "itemScale"], ["Mapa 1", "itemMap"]];
  return (
    <section className="absolute top-[49px] right-[25px] bottom-[19px] left-[632px] flex flex-col border border-[#8f8f8f] bg-[#efefef] shadow-[0_0_18px_rgba(0,0,0,0.45)]">
      <header className="flex h-[30px] shrink-0 items-center bg-white pb-0.5 pl-2 text-[12px] text-[#8a8a8a]">
        <Icon name="qgis" size={16} />
        <span className="ml-1.5">*atlas</span>
        <WinButtons />
      </header>
      <MenuBar gap="gap-[12px] pl-2" items={["&Layout", "&Editar", "E&xibir", "&Itens", "&Adicionar Item", "Atlas", "Opções"]} />
      <div className="flex h-10 shrink-0 items-center border-b border-[#b5b5b5] bg-gradient-to-b from-[#fafafa] to-[#ececec]">
        <Handle />
        <Tool name="save" label="Salvar projeto" />
        <span className="mx-[3px]"><Sep /></span>
        <Tool name="newLayout" label="Novo layout" />
        <Tool name="dupLayout" label="Duplicar layout" />
        <Tool name="manager" label="Gerenciador" />
        <Tool name="folder" label="Adicionar do modelo" />
        <Tool name="saveAs" label="Salvar como modelo" />
        <span className="mx-1"><Sep /></span>
        <Tool name="newPage" label="Adicionar páginas" />
        <span className="mx-[3px]"><Sep /></span>
        <Tool name="print" label="Imprimir" />
        <Tool name="image" label="Exportar imagem" />
        <Tool name="svgOut" label="Exportar SVG" />
        <Tool name="pdf" label="Exportar PDF" />
        <Tool name="undo" label="Desfazer" />
        <Tool name="redo" label="Refazer" />
        <Gap />
        <Handle />
        <Tool name="atlas" label="Pré-visualizar atlas" wide />
        <Tool name="first" label="Primeira feição" />
        <Tool name="prev" label="Feição anterior" />
        <span className="flex h-[29px] w-[144px] shrink-0 items-center rounded-[3px] border border-[#adadad] bg-white font-['DejaVu_Sans_Condensed','DejaVu_Sans',sans-serif] text-[11px]">
          <input aria-label="Feição do atlas" defaultValue="1: Ivani de Faria" className="w-0 min-w-0 flex-1 pl-1 outline-none" />
          <button aria-label="Abrir lista" className="flex h-full w-5 items-center justify-center border-l border-[#adadad]"><Drop /></button>
        </span>
        <Tool name="next" label="Próxima feição" />
        <Tool name="last" label="Última feição" />
        <Tool name="print" label="Imprimir atlas" />
        <Tool name="image" label="Exportar atlas" />
        <Drop />
        <Gap />
        <Tool name="atlasSettings" label="Configurações do atlas" />
        <Gap />
        <Handle />
        <Tool name="zoomIn" label="Aproximar" />
        <Gap />
        <More />
        <Handle />
        <Tool name="lock" label="Bloquear itens" />
        <Gap />
        <More />
      </div>
      <div className="flex min-h-0 flex-1">
        <nav className="flex w-[39px] shrink-0 flex-col items-center border-r border-[#b5b5b5] bg-[#f6f6f6] pt-[5px]">
          <HHandle />
          <span className="h-0.5 shrink-0" />
          {sideTools.map(([n, l]) => (
            <Tool key={n} name={n} label={l} wide={n === "select"} />
          ))}
        </nav>
        <div className="flex min-w-0 flex-1 flex-col">
          <main className="min-h-0 flex-1 overflow-hidden bg-[#d7d7d7] pt-[189px] pl-[27px]">
            <div className="flex h-[19px] w-[72px] items-center rounded-t-[4px] border border-b-0 border-[#a5a5a5] bg-[#bdbdbd] pl-px font-['DejaVu_Sans_Condensed','DejaVu_Sans',sans-serif] text-[11px] whitespace-nowrap text-[#777]">
              Ivani de Faria
            </div>
            <LayoutSheet />
          </main>
          <div className="flex h-4 shrink-0 border border-[#b5b5b5] bg-[#e0e0e0]">
            <ScrollArrow turn="rotate-90" />
            <div className="flex-1 border-x border-[#b5b5b5] bg-[#fafafa]" />
            <span className="w-[105px]" />
            <ScrollArrow turn="-rotate-90" />
          </div>
        </div>
        <aside className="ml-[6px] flex w-[343px] shrink-0 flex-col font-['DejaVu_Sans_Condensed','DejaVu_Sans',sans-serif] text-[11px]">
          <Tabs items={["Itens", "Desfazer histórico"]} />
          <div className="flex h-5 shrink-0 items-center justify-between pl-1">
            <h2>Itens</h2>
            <DockButtons />
          </div>
          <div className="h-[75px] shrink-0 border border-[#b5b5b5] bg-white">
            <table className="w-full table-fixed border-collapse">
              <thead>
                <tr className="h-[19px] border-b border-[#c4c4c4] bg-gradient-to-b from-white to-[#ebebeb] text-left">
                  <th className="w-9 border-r border-[#c9c9c9] pl-[3px]" aria-label="Visível"><Icon name="eyeGrey" size={16} /></th>
                  <th className="w-9 border-r border-[#c9c9c9] pl-[3px]" aria-label="Bloqueado">
                    <svg width="14" height="16" viewBox="0 0 14 16" fill="none">
                      <path d="M3.500 8V5a3.500 3.500 0 0 1 7 0v3" stroke="#999" strokeWidth="1.500" />
                      <rect x="1" y="7" width="12" height="8" rx="1" fill="#666" />
                    </svg>
                  </th>
                  <th className="pl-0.5 font-normal">Item</th>
                </tr>
              </thead>
              <tbody>
                {items.map(([t, ic], i) => (
                  <tr key={t} className={`h-[18px] ${i === 2 ? "bg-[#efefef]" : ""}`}>
                    <td className="pl-[3px]"><Check id={`vis${i}`} checked label={`${t} visível`} /></td>
                    <td className="pl-[3px]"><Check id={`lck${i}`} label={`${t} bloqueado`} /></td>
                    <td className="pl-1">
                      <span className="flex items-center gap-[7px]"><Icon name={ic} size={14} />{t}</span>
                    </td>
                  </tr>
                ))}
              </tbody>
            </table>
          </div>
          <div className="flex h-[7px] shrink-0 items-center justify-center"><HHandle /></div>
          <Tabs items={["Propriedades do Item", "Composição", "Guias", "Atlas"]} />
          <div className="flex h-[26px] shrink-0 items-center justify-between pb-1 pl-1">
            <h2>Propriedades do Item</h2>
            <DockButtons />
          </div>
          <h2 className="h-[17px] shrink-0 bg-[#c6c6c6] pl-[5px] text-[12px] leading-[17px] font-bold">Mapa 1</h2>
          <div className="flex h-[29px] shrink-0 items-center pl-[3px]">
            <SmallTool name="refresh" label="Atualizar" />
            <span className="mx-[3px]"><Sep /></span>
            <SmallTool name="setExtent" label="Definir extensão" />
            <SmallTool name="viewExtent" label="Ver extensão" />
            <span className="mx-[3px]"><Sep /></span>
            <SmallTool name="setScale" label="Definir escala" />
            <SmallTool name="viewScale" label="Ver escala" />
            <span className="mx-[3px]"><Sep /></span>
            <SmallTool name="bookmark" label="Favoritos" />
            <SmallTool name="movePreview" label="Mover conteúdo" />
            <span className="mx-[3px]"><Sep /></span>
            <SmallTool name="labels" label="Rótulos" />
            <SmallTool name="clip" label="Recorte" />
          </div>
          <PropertyForm />
        </aside>
      </div>
      <footer className="flex h-[27px] shrink-0 items-center pt-px font-['DejaVu_Sans_Condensed','DejaVu_Sans',sans-serif] text-[11px]">
        <span className="ml-auto">x: 61.9865 mm</span>
        <span className="ml-[31px]">y: 103.224 mm</span>
        <span className="ml-[31px]">página: 1</span>
        <span className="ml-[60px] flex h-[22px] w-[155px] items-center rounded-[2px] border border-[#adadad] bg-white">
          <input aria-label="Zoom" defaultValue="50.0%" className="w-0 min-w-0 flex-1 pl-[3px] outline-none" />
          <button aria-label="Níveis de zoom" className="flex h-full w-5 items-center justify-center border-l border-[#adadad]"><Drop /></button>
        </span>
        <input
          type="range"
          aria-label="Nível de zoom"
          defaultValue={3}
          className="mr-6 ml-[7px] h-1 w-[98px] appearance-none rounded-full border border-[#b5b5b5] bg-[#dedede] [&::-webkit-slider-thumb]:h-[13px] [&::-webkit-slider-thumb]:w-[13px] [&::-webkit-slider-thumb]:appearance-none [&::-webkit-slider-thumb]:rounded-[3px] [&::-webkit-slider-thumb]:border [&::-webkit-slider-thumb]:border-[#a5a5a5] [&::-webkit-slider-thumb]:bg-white"
        />
      </footer>
      {/* freehand mark around the feature navigator */}
      <svg className="pointer-events-none absolute top-[20px] left-[487px]" width="320" height="76" viewBox="1120 70 320 76" fill="none">
        <path
          d="M1151 131C1144 132 1136 132 1132 128 1126 122 1126 105 1128 97 1131 88 1136 83 1145 83 1180 82 1225 86 1259 84 1280 82 1300 78 1322 77 1345 76 1370 76 1387 78 1400 79 1408 82 1415 90 1423 98 1429 106 1430 110 1431 118 1426 127 1420 131 1412 136 1403 134 1394 135 1383 137 1375 139 1360 138H1264C1245 137 1235 133 1217 133 1190 132 1165 136 1142 137"
          stroke="#e8202a"
          strokeWidth="2"
        />
      </svg>
    </section>
  );
}

export default function App() {
  return (
    <div className="relative h-screen w-full overflow-hidden font-['Open_Sans','Noto_Sans',sans-serif] text-[12px] leading-4 text-black">
      <Background />
      <MainWindow />
      <AtlasWindow />
    </div>
  );
}
